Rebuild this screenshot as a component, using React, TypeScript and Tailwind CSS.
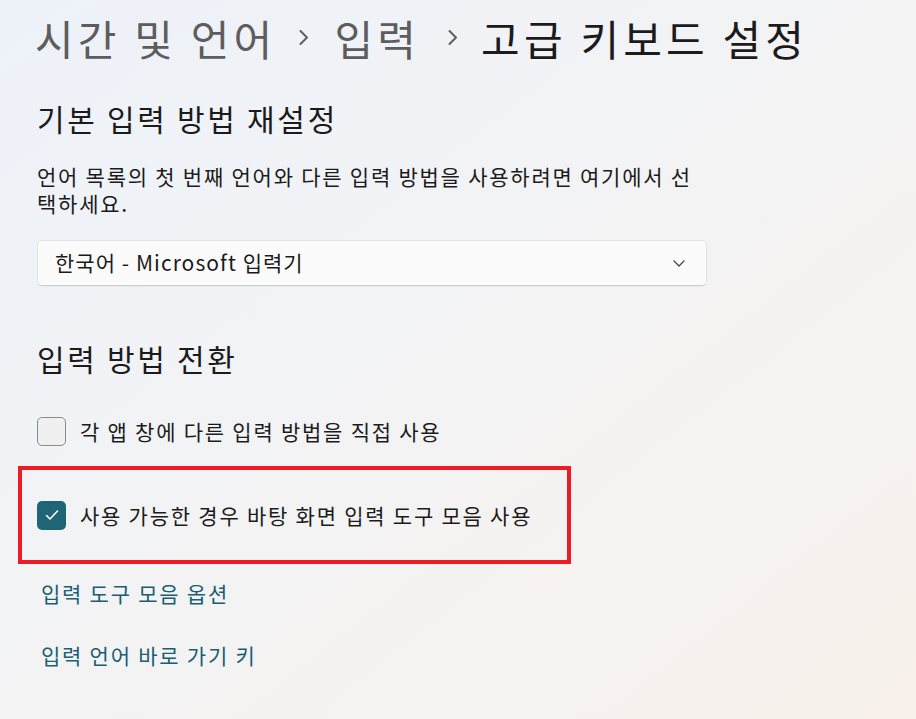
import React from "react";

const font = { fontFamily: '"Noto Sans CJK KR", "Noto Sans", sans-serif' };

function Checkbox({ checked }: { checked?: boolean }) {
  if (checked) {
    return (
      <div className="w-[29px] h-[29px] rounded-[5px] bg-[#1e6575] flex items-center justify-center shrink-0">
        <svg width="16" height="16" viewBox="0 0 16 16" fill="none">
          <path d="M2.5 8.5 L6 12 L13.5 4" stroke="white" strokeWidth="1.6" strokeLinecap="round" strokeLinejoin="round" />
        </svg>
      </div>
    );
  }
  return <div className="w-[29px] h-[29px] rounded-[5px] border border-[#8a8a8a] bg-[#f0f0f0] shrink-0" />;
}

function Chevron({ className }: { className: string }) {
  return (
    <svg width="12" height="17" viewBox="0 0 12 17" fill="none" className={`shrink-0 ${className}`}>
      <path d="M2.5 2 L9 8.5 L2.5 15" stroke="#5d5d5d" strokeWidth="2" strokeLinecap="round" strokeLinejoin="round" />
    </svg>
  );
}

export default function App() {
  return (
    <div
      className="w-[916px] h-[719px] overflow-hidden bg-gradient-to-br from-[#edf2f9] via-[#f3f3f4] to-[#f8f1eb] text-[#1b1b1b] tracking-[0.11em]"
      style={font}
    >
      {/* breadcrumb */}
      <div className="flex items-center pl-[35px] pt-[5px] h-[70px] text-[42px] leading-[64px] tracking-[0.1em]">
        <span className="text-[#5d5d5d]">시간 및 언어</span>
        <Chevron className="ml-[22px] mr-[24px]" />
        <span className="text-[#5d5d5d]">입력</span>
        <Chevron className="ml-[27px] mr-[22px]" />
        <span>고급 키보드 설정</span>
      </div>

      <div className="pl-[37px]">
        <h2 className="mt-[28px] text-[30px] leading-[40px] tracking-[0.09em]">기본 입력 방법 재설정</h2>
        <p className="mt-[25px] w-[672px] text-[21px] leading-[27px]">
          언어 목록의 첫 번째 언어와 다른 입력 방법을 사용하려면 여기에서 선택하세요.
        </p>
        <div className="mt-[23px] w-[670px] h-[46px] rounded-[5px] bg-[#fbfbfb] border border-[#e3e3e3] border-b-[#cdcdcd] shadow-[0_1px_0_rgba(0,0,0,0.03)] flex items-center justify-between pl-[17px] pr-[20px] tracking-normal">
          <span className="text-[21px] tracking-[0.05em]">한국어 - Microsoft 입력기</span>
          <svg width="14" height="14" viewBox="0 0 14 14" fill="none">
            <path d="M2 5 L7 10 L12 5" stroke="#444" strokeWidth="1.3" strokeLinecap="round" strokeLinejoin="round" />
          </svg>
        </div>

        <h2 className="mt-[52px] text-[30px] leading-[40px] tracking-[0.09em]">입력 방법 전환</h2>

        <div className="mt-[39px] flex items-center gap-[14px]">
          <Checkbox />
          <span className="text-[21px] leading-[29px]">각 앱 창에 다른 입력 방법을 직접 사용</span>
        </div>
      </div>

      <div className="ml-[18px] mt-[20px] w-[553px] h-[98px] border-4 border-[#ed1c24] flex items-center pl-[15px]">
        <div className="flex items-center gap-[14px]">
          <Checkbox checked />
          <span className="text-[21px] leading-[29px]">사용 가능한 경우 바탕 화면 입력 도구 모음 사용</span>
        </div>
      </div>

      <div className="pl-[41px] text-[21px] text-[#1a5e72]">
        <div className="mt-[14px] leading-[30px]">입력 도구 모음 옵션</div>
        <div className="mt-[32px] leading-[30px]">입력 언어 바로 가기 키</div>
      </div>
    </div>
  );
}
